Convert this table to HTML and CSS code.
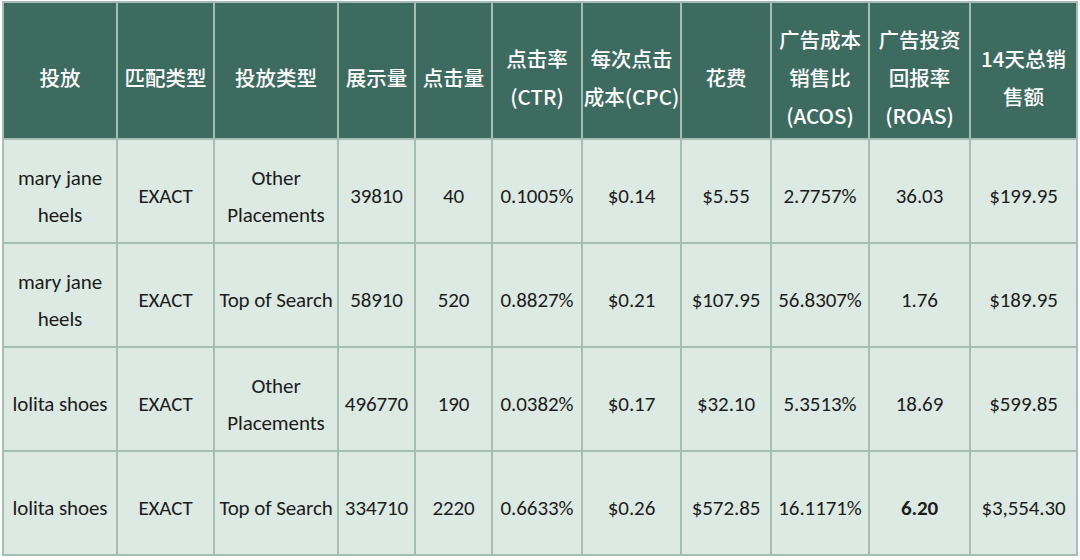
FILE: index.html
```html
<!DOCTYPE html>
<html lang="zh">
<head>
<meta charset="utf-8">
<title>广告投放数据</title>
<link rel="stylesheet" href="styles.css">
</head>
<body>
<table class="ad-table">
  <colgroup>
    <col class="c1"><col class="c2"><col class="c3"><col class="c4"><col class="c5"><col class="c6">
    <col class="c7"><col class="c8"><col class="c9"><col class="c10"><col class="c11">
  </colgroup>
  <thead>
    <tr>
      <th>投放</th>
      <th>匹配类型</th>
      <th>投放类型</th>
      <th>展示量</th>
      <th>点击量</th>
      <th>点击率<br>(CTR)</th>
      <th>每次点击<br>成本(CPC)</th>
      <th>花费</th>
      <th>广告成本<br>销售比<br>(ACOS)</th>
      <th>广告投资<br>回报率<br>(ROAS)</th>
      <th>14天总销<br>售额</th>
    </tr>
  </thead>
  <tbody>
    <tr>
      <td>mary jane<br>heels</td>
      <td>EXACT</td>
      <td>Other<br>Placements</td>
      <td>39810</td>
      <td>40</td>
      <td>0.1005%</td>
      <td>$0.14</td>
      <td>$5.55</td>
      <td>2.7757%</td>
      <td>36.03</td>
      <td>$199.95</td>
    </tr>
    <tr>
      <td>mary jane<br>heels</td>
      <td>EXACT</td>
      <td>Top of Search</td>
      <td>58910</td>
      <td>520</td>
      <td>0.8827%</td>
      <td>$0.21</td>
      <td>$107.95</td>
      <td>56.8307%</td>
      <td>1.76</td>
      <td>$189.95</td>
    </tr>
    <tr>
      <td>lolita shoes</td>
      <td>EXACT</td>
      <td>Other<br>Placements</td>
      <td>496770</td>
      <td>190</td>
      <td>0.0382%</td>
      <td>$0.17</td>
      <td>$32.10</td>
      <td>5.3513%</td>
      <td>18.69</td>
      <td>$599.85</td>
    </tr>
    <tr>
      <td>lolita shoes</td>
      <td>EXACT</td>
      <td>Top of Search</td>
      <td>334710</td>
      <td>2220</td>
      <td>0.6633%</td>
      <td>$0.26</td>
      <td>$572.85</td>
      <td>16.1171%</td>
      <td class="strong">6.20</td>
      <td>$3,554.30</td>
    </tr>
  </tbody>
</table>
</body>
</html>
```

FILE: styles.css
```css
html, body {
  margin: 0;
  padding: 0;
  background: #ffffff;
}

.ad-table {
  margin: 1px 0 0 2px;
  width: 1076px;
  table-layout: fixed;
  border-collapse: separate;
  border-spacing: 0;
  border-left: 2px solid #a6bdb4;
  border-top: 2px solid #a6bdb4;
  font-family: Carlito, Lato, "Liberation Sans", "Noto Sans CJK SC", sans-serif;
}

.c1 { width: 114px; }
.c2 { width: 97px; }
.c3 { width: 124px; }
.c4 { width: 77px; }
.c5 { width: 77px; }
.c6 { width: 90px; }
.c7 { width: 99px; }
.c8 { width: 90px; }
.c9 { width: 98px; }
.c10 { width: 101px; }
.c11 { width: 107px; }

.ad-table th,
.ad-table td {
  box-sizing: border-box;
  padding: 0;
  text-align: center;
  vertical-align: middle;
  border-right: 2px solid #a6bdb4;
  border-bottom: 2px solid #a6bdb4;
  white-space: nowrap;
}

.ad-table th {
  height: 137px;
  padding-top: 13px;
  background: #3e6b5f;
  color: #ffffff;
  font-family: "Noto Sans CJK SC", sans-serif;
  font-weight: 500;
  font-size: 20.5px;
  line-height: 38px;
}

.ad-table td {
  height: 104px;
  padding-top: 11px;
  background: #ddeae3;
  color: #1c1c1c;
  font-size: 21px;
  line-height: 37px;
  letter-spacing: -0.1px;
}

.ad-table td.strong {
  font-weight: 700;
}
```
